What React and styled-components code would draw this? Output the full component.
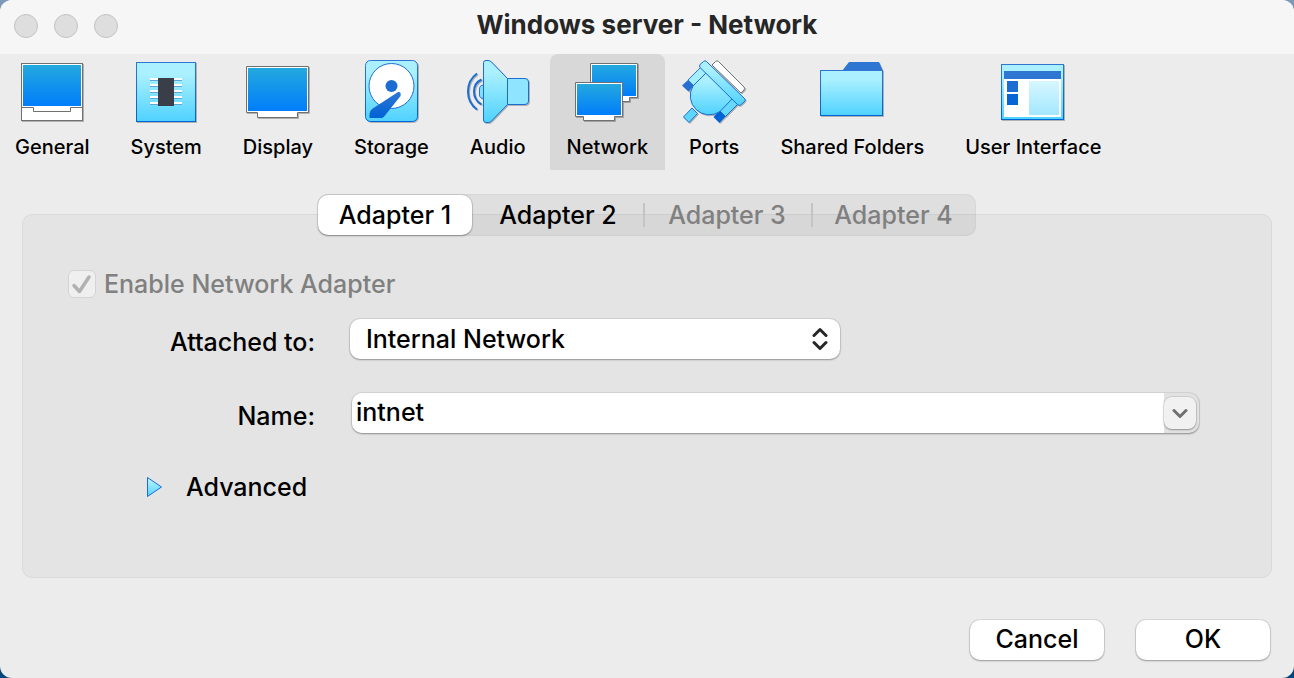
import React, { useState } from "react";
import styled, { createGlobalStyle, css } from "styled-components";

const GlobalStyle = createGlobalStyle`
  *, *::before, *::after { box-sizing: border-box; }
  body {
    margin: 0;
    background: linear-gradient(#7c9ab8 0%, #7c9ab8 50%, #04477f 50%, #04477f 100%);
    font-family: Inter, "Liberation Sans", sans-serif;
    font-size: 25px;
    font-weight: 500;
    line-height: 32px;
    color: #000;
  }
  button, input, select { font: inherit; color: inherit; margin: 0; }
`;

const raised = css`
  border: 0;
  background: #fff;
  border-radius: 10px;
  box-shadow: 0 0 0 1px rgba(0, 0, 0, 0.08), 0 1px 2px rgba(0, 0, 0, 0.3);
`;

const Window = styled.main`
  display: flex;
  flex-direction: column;
  min-height: 100vh;
  background: #ececec;
  border-radius: 12px;
  overflow: hidden;
`;

const TitleBar = styled.header`
  display: grid;
  grid-template-columns: 1fr auto 1fr;
  align-items: center;
  height: 54px;
  padding: 0 14px 2px;
  background: #f6f6f6;
`;

const Title = styled.h1`
  margin: 0;
  padding-bottom: 2px;
  font-size: 26px;
  font-weight: 700;
  color: #262626;
`;

const Lights = styled.div`
  display: flex;
  gap: 16px;
`;

const Light = styled.button`
  width: 24px;
  height: 24px;
  padding: 0;
  border: 1px solid #c3c3c3;
  border-radius: 50%;
  background: #dedede;
`;

const Toolbar = styled.nav`
  display: flex;
  gap: 7px;
  margin-left: -2px;
`;

const ToolButton = styled.button`
  display: flex;
  flex-direction: column;
  align-items: center;
  gap: 10px;
  height: 116px;
  padding: 6px 17px 0;
  border: 0;
  border-radius: 8px 8px 0 0;
  background: ${(p) => (p.$active ? "#d8d8d8" : "transparent")};
  font-size: 20px;
  line-height: 26px;
  white-space: nowrap;
`;

const Icon = styled.svg`
  display: block;
  width: 64px;
  height: 64px;
  margin: 0 -8px;
  overflow: visible;
  filter: drop-shadow(1px 1px 0 rgba(0, 0, 0, 0.25));
`;

const Content = styled.section`
  display: flex;
  flex-direction: column;
  flex: 1;
  padding: 24px 22px 0;
`;

const Tabs = styled.div`
  display: grid;
  grid-template-columns: 155px 170px 168px 165px;
  align-self: center;
  z-index: 1;
  height: 42px;
  border-radius: 10px;
  background: rgba(0, 0, 0, 0.055);
  box-shadow: inset 0 0 2px rgba(0, 0, 0, 0.12);
`;

const Tab = styled.button`
  display: flex;
  align-items: center;
  justify-content: center;
  padding: 0;
  border: 0;
  background: none;
  position: relative;

  &:disabled { color: #808080; }
  &:disabled::before {
    content: "";
    position: absolute;
    left: 0;
    top: 9px;
    bottom: 9px;
    width: 2px;
    background: #c4c4c4;
  }
  &[aria-selected="true"] {
    ${raised}
    margin: 1px 1px 1px 0;
  }
`;

const Panel = styled.div`
  display: flex;
  flex-direction: column;
  flex: 1;
  margin-top: -22px;
  padding: 55px 72px 24px 45px;
  border: 1px solid #d9d9d9;
  border-radius: 10px;
  background: #e4e4e4;
`;

const CheckRow = styled.label`
  display: flex;
  align-items: center;
  gap: 8px;
  height: 28px;
  color: #808080;
`;

const CheckBox = styled.span`
  display: grid;
  width: 28px;
  height: 28px;

  > * { grid-area: 1 / 1; }
  > svg { pointer-events: none; }
  > input {
    appearance: none;
    width: 28px;
    height: 28px;
    border: 1px solid #d4d4d4;
    border-radius: 6px;
    background: #efefef;
  }
`;

const Form = styled.div`
  display: grid;
  grid-template-columns: 247px minmax(0, 1fr);
  grid-auto-rows: 40px;
  column-gap: 35px;
  row-gap: 34px;
  align-items: center;
  margin-top: 21px;
`;

const FieldLabel = styled.label`
  padding-top: 6px;
  text-align: right;
`;

const SelectBox = styled.div`
  display: grid;
  align-items: center;
  width: 100%;
  max-width: 490px;

  > * { grid-area: 1 / 1; }
  > svg { justify-self: end; margin-right: 12px; pointer-events: none; }
`;

const Select = styled.select`
  ${raised}
  appearance: none;
  width: 100%;
  height: 40px;
  padding: 0 40px 0 16px;
`;

const Combo = styled.div`
  display: flex;
  align-items: center;
  height: 40px;
  margin-left: 2px;
  padding-right: 3px;
  border-radius: 10px;
  background: #e2e2e2;
  box-shadow: 0 0 0 1px rgba(0, 0, 0, 0.06), 0 1px 2px rgba(0, 0, 0, 0.35);
`;

const ComboInput = styled.input`
  flex: 1;
  min-width: 0;
  height: 40px;
  padding: 0 4px 2px;
  border: 0;
  outline: 0;
  border-radius: 10px 0 0 10px;
  background: #fff;
`;

const ComboButton = styled.button`
  ${raised}
  display: grid;
  place-items: center;
  width: 32px;
  height: 32px;
  padding: 0;
  border-radius: 8px;
  background: #f1f1f1;
`;

const Disclosure = styled.button`
  display: flex;
  align-items: center;
  align-self: flex-start;
  gap: 23px;
  margin: 38px 0 0 78px;
  padding: 0;
  border: 0;
  background: none;
`;

const Footer = styled.footer`
  display: flex;
  justify-content: flex-end;
  gap: 32px;
  padding: 42px 24px 18px;
`;

const PushButton = styled.button`
  ${raised}
  width: 134px;
  height: 40px;
  padding: 0 0 2px;
`;

const GradientDefs = styled.svg`
  position: absolute;
  width: 0;
  height: 0;
`;

function Gradients() {
  return (
    <GradientDefs aria-hidden="true">
      <defs>
        <linearGradient id="screen" x1="0" y1="0" x2="0" y2="1">
          <stop offset="0" stopColor="#24a9de" />
          <stop offset="1" stopColor="#007dfb" />
        </linearGradient>
        <linearGradient id="sky" x1="0" y1="0" x2="0" y2="1">
          <stop offset="0.2" stopColor="#aaf0ff" />
          <stop offset="1" stopColor="#4fd2ff" />
        </linearGradient>
        <linearGradient id="deep" x1="0" y1="0" x2="0" y2="1">
          <stop offset="0" stopColor="#2f76d2" />
          <stop offset="1" stopColor="#0063d6" />
        </linearGradient>
        <linearGradient id="pale" x1="0" y1="0" x2="0" y2="1">
          <stop offset="0" stopColor="#d6f7ff" />
          <stop offset="1" stopColor="#a3e7ff" />
        </linearGradient>
      </defs>
    </GradientDefs>
  );
}

const icons = {
  General: (
    <>
      <rect x="1.5" y="3.5" width="61" height="57" fill="#fff" stroke="#707070" />
      <rect x="3" y="5" width="58" height="41" fill="url(#screen)" />
      <path d="M1.5 47.5H13.5V51.5H50.5V47.5H62.5" fill="none" stroke="#707070" />
    </>
  ),
  System: (
    <>
      <rect x="2.5" y="2.5" width="59" height="59" fill="url(#sky)" stroke="url(#deep)" />
      {[18, 24, 30, 36, 42].map((y) => (
        <g key={y}>
          <rect x="16" y={y} width="32" height="2" fill="#fff" />
          <rect x="16" y={y + 2} width="32" height="1" fill="#62a5d8" />
        </g>
      ))}
      <rect x="24" y="18" width="16" height="28" fill="#3a3e49" />
    </>
  ),
  Display: (
    <>
      <path d="M0.5 6.5H62.5V52.5H51.5V57.5H11.5V52.5H0.5Z" fill="#fff" stroke="#707070" />
      <rect x="2" y="8" width="59" height="43" fill="url(#screen)" />
    </>
  ),
  Storage: (
    <>
      <rect x="6.5" y="0.5" width="52" height="61" rx="5" fill="url(#sky)" stroke="url(#deep)" />
      <circle cx="32.5" cy="26" r="22.5" fill="#fff" stroke="#1f6fd4" />
      <circle cx="32.5" cy="26" r="6" fill="#1b6dd3" />
      <path d="M37.5 33L13 49Q10.5 51 10.5 54V58H23Q25 57 26 55.5L41.5 36Q42.5 31.5 39 32Z" fill="url(#deep)" />
    </>
  ),
  Audio: (
    <>
      <path d="M11 13.5Q2 20 2 31.5T11 49.5M15.5 19.5Q8 23 8 31.5T15.5 44.5" fill="none" stroke="#1b6dd3" strokeWidth="2" />
      <path d="M18 25Q13.5 25 13.5 29V35Q13.5 38.5 18 38.5Z" fill="#7fe0ff" stroke="#2f76d2" />
      <path d="M41.5 18.5H59Q62.5 18.5 62.5 22V41Q62.5 44.5 59 44.5H41.5Z" fill="#8fe4ff" stroke="#1b6dd3" />
      <path d="M17.5 2.5Q17.5 0.5 20 0.5H22Q24 0.5 25.5 2L41.5 18.5V44.5L25.5 61Q24 62.5 22 62.5H20Q17.5 62.5 17.5 60Z" fill="url(#sky)" stroke="#1b6dd3" />
    </>
  ),
  Network: (
    <>
      <path d="M15.5 3.5H62.5V37.5H54.5V41.5H23.5V37.5H15.5Z" fill="#fff" stroke="#707070" />
      <rect x="17" y="5" width="44" height="31" fill="url(#screen)" />
      <path d="M0.5 22.5H47.5V56.5H39.5V60.5H8.5V56.5H0.5Z" fill="#fff" stroke="#707070" />
      <rect x="2" y="24" width="44" height="31" fill="url(#screen)" />
    </>
  ),
  Ports: (
    <>
      <path d="M33.5 1.5Q35 0 36.5 1.5L62 27Q63.5 28.5 62 30L59 33L30 5Z" fill="#fff" stroke="#707070" />
      <path d="M10 48L15.5 53.5L7 62.5L1.5 57Z" fill="#5fd6ff" stroke="#1b6dd3" />
      <path d="M19 7L24 13L12 26L6 20Z" fill="#a5eeff" stroke="#2f76d2" />
      <path d="M6 20L12 26L6.5 31.5L0 25.5Z" fill="#2570d2" />
      <path d="M50 38L56 44L43.5 56.5L37.5 50.5Z" fill="#67d9ff" stroke="#1b6dd3" />
      <path d="M37.5 50.5L43.5 56.5L37.5 63L31.5 57Z" fill="#0063d6" />
      <path d="M24 13L11 26A19 19 0 0 0 38 51.5L50.5 38.5Z" fill="url(#sky)" stroke="#1b6dd3" />
      <path d="M21.5 1.5Q23 0 24.5 1.5L62.5 38.5Q64 40 62.5 41.5L58.5 45Q57 46 55.5 44.5L18 7.5Q17 6 18 4.5Z" fill="url(#sky)" stroke="#1b6dd3" />
    </>
  ),
  "Shared Folders": (
    <>
      <path d="M22 11L29 2H59L63 11Z" fill="#2f76d2" />
      <rect x="0.5" y="10.5" width="62" height="45" fill="url(#sky)" stroke="url(#deep)" />
    </>
  ),
  "User Interface": (
    <>
      <rect x="0.5" y="4.5" width="62" height="55" fill="url(#sky)" stroke="url(#deep)" />
      <rect x="3" y="11" width="57" height="46" fill="#fff" />
      <rect x="3" y="11" width="57" height="8" fill="#2f76d2" />
      <rect x="6" y="21" width="11" height="11" fill="#1b6dd3" />
      <rect x="6" y="34" width="11" height="11" fill="#0865d5" />
      <rect x="28" y="21" width="30" height="34" fill="url(#pale)" />
    </>
  ),
};

const adapters = [
  { name: "Adapter 1", enabled: true },
  { name: "Adapter 2", enabled: true },
  { name: "Adapter 3", enabled: false },
  { name: "Adapter 4", enabled: false },
];

export default function App() {
  const [page, setPage] = useState("Network");
  const [adapter, setAdapter] = useState("Adapter 1");

  return (
    <Window>
      <GlobalStyle />
      <Gradients />
      <TitleBar>
        <Lights>
          <Light aria-label="Close" />
          <Light aria-label="Minimize" />
          <Light aria-label="Zoom" />
        </Lights>
        <Title>Windows server - Network</Title>
      </TitleBar>
      <Toolbar>
        {Object.keys(icons).map((name) => (
          <ToolButton key={name} $active={page === name} onClick={() => setPage(name)}>
            <Icon viewBox="0 0 64 64" aria-hidden="true">{icons[name]}</Icon>
            {name}
          </ToolButton>
        ))}
      </Toolbar>
      <Content>
        <Tabs role="tablist">
          {adapters.map(({ name, enabled }) => (
            <Tab
              key={name}
              role="tab"
              aria-selected={adapter === name}
              disabled={!enabled}
              onClick={() => setAdapter(name)}
            >
              {name}
            </Tab>
          ))}
        </Tabs>
        <Panel>
          <CheckRow>
            <CheckBox>
              <input type="checkbox" defaultChecked disabled />
              <svg width="28" height="28" viewBox="0 0 28 28" aria-hidden="true">
                <path d="M6 15.5L11.5 21.5L21 7" fill="none" stroke="#b1b1b1" strokeWidth="3.5" strokeLinecap="round" strokeLinejoin="round" />
              </svg>
            </CheckBox>
            Enable Network Adapter
          </CheckRow>
          <Form>
            <FieldLabel htmlFor="attached">Attached to:</FieldLabel>
            <SelectBox>
              <Select id="attached" defaultValue="Internal Network">
                <option>Internal Network</option>
              </Select>
              <svg width="16" height="24" viewBox="0 0 16 24" aria-hidden="true">
                <path d="M2 8.5L8 2.5L14 8.5M2 15.5L8 21.5L14 15.5" fill="none" stroke="#262626" strokeWidth="3" strokeLinecap="round" strokeLinejoin="round" />
              </svg>
            </SelectBox>
            <FieldLabel htmlFor="name">Name:</FieldLabel>
            <Combo>
              <ComboInput id="name" type="text" defaultValue="intnet" />
              <ComboButton aria-label="Show names">
                <svg width="16" height="12" viewBox="0 0 16 12" aria-hidden="true">
                  <path d="M2 3.5L8 9.5L14 3.5" fill="none" stroke="#707070" strokeWidth="3" strokeLinecap="round" strokeLinejoin="round" />
                </svg>
              </ComboButton>
            </Combo>
          </Form>
          <Disclosure aria-expanded="false">
            <svg width="17" height="22" viewBox="0 0 17 22" aria-hidden="true">
              <path d="M1.5 1.5L15.5 11L1.5 20.5Z" fill="url(#sky)" stroke="#1b6dd3" strokeLinejoin="round" />
            </svg>
            Advanced
          </Disclosure>
        </Panel>
      </Content>
      <Footer>
        <PushButton>Cancel</PushButton>
        <PushButton>OK</PushButton>
      </Footer>
    </Window>
  );
}
